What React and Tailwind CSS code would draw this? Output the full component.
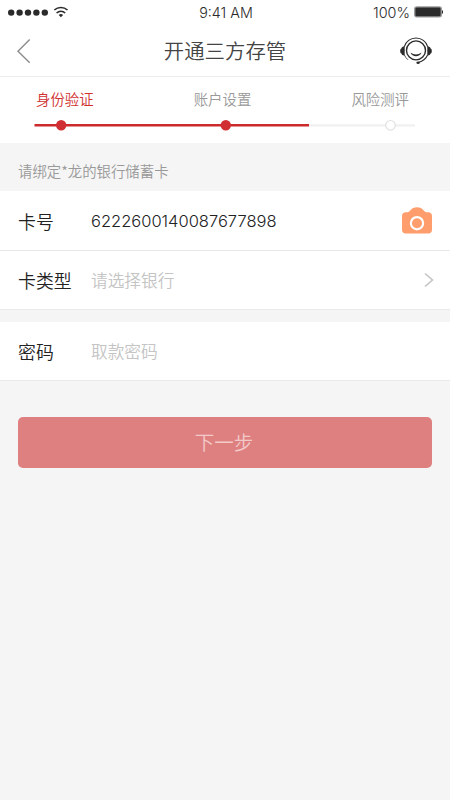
const steps = [
  { label: '身份验证', state: 'current' },
  { label: '账户设置', state: 'reached' },
  { label: '风险测评', state: 'pending' },
]

function StatusBar() {
  return (
    <div className="grid h-[25px] grid-cols-3 items-center pl-2 pr-[6px] font-['Inter','Noto_Sans_CJK_SC',sans-serif] text-[#2b2b2b]">
      <div className="flex items-center">
        <svg width="62" height="14" viewBox="0 0 62 14" fill="currentColor">
          <circle cx="3.2" cy="6.6" r="3.2" />
          <circle cx="11.6" cy="6.6" r="3.2" />
          <circle cx="20" cy="6.6" r="3.2" />
          <circle cx="28.4" cy="6.6" r="3.2" />
          <circle cx="36.8" cy="6.6" r="3.2" />
          <g fill="none" stroke="currentColor" strokeWidth="1.6">
            <path d="M46.3 4a9.8 9.8 0 0 1 13.2 0" />
            <path d="M48.6 7a6.2 6.2 0 0 1 8.6 0" />
          </g>
          <path d="M50.7 9a3.2 3.2 0 0 1 4.4 0l-2.2 2.300z" />
        </svg>
      </div>
      <span className="pt-px text-center text-[14.3px] font-[350]">9:41 AM</span>
      <div className="flex items-center justify-end gap-1">
        <span className="pt-px text-[14.4px] font-[350]">100%</span>
        <svg className="mr-px" width="29" height="12" viewBox="0 0 29 12">
          <rect x="0.7" y="0.9" width="26.6" height="10" rx="1.8" fill="#2b2b2b" stroke="#9b9b9b" strokeWidth="1.4" />
          <path d="M28 4v4c1.5-.6 1.5-3.4 0-4z" fill="#2b2b2b" />
        </svg>
      </div>
    </div>
  )
}

function ServiceIcon() {
  return (
    <svg width="32" height="28" viewBox="0 0 32 28" fill="none" stroke="#2b2b2b">
      <path d="M4.2 9.8A12.3 12.3 0 0 1 27.8 9.8M27.6 18c-1.6 3.7-4.8 6.3-9.2 7.500" strokeWidth="1.1" />
      <path d="M4.4 18a12.3 12.3 0 0 0 3.6 4.800" strokeWidth="0.8" />
      <circle cx="16" cy="13.4" r="9.5" strokeWidth="1.4" />
      <path d="M10.5 15.5c3.2 2.500 7.800 2.500 11 0c-1.700 5-9.300 5-11 0z" fill="#2b2b2b" stroke="none" />
      <path d="M4.7 9.600v8.800c-1.700.2-2.900-.4-3.300-1.900C.6 16.300.2 15.400.2 14s.4-2.300 1.200-2.500c.4-1.500 1.600-2.100 3.300-1.900zM27.300 9.600v8.800c1.700.2 2.900-.4 3.300-1.900.8-.2 1.200-1.100 1.200-2.500s-.4-2.300-1.200-2.500c-.4-1.500-1.600-2.100-3.300-1.900z" fill="#2b2b2b" stroke="none" />
      <ellipse cx="18.1" cy="25.8" rx="1.7" ry="1.3" fill="#2b2b2b" stroke="none" />
    </svg>
  )
}

function CameraIcon() {
  return (
    <svg className="mb-1" width="30" height="27" viewBox="0 0 30 27">
      <path d="M4 5.3h1.5C8 5.300 9 .3 15 .3s7 5 9.500 5H26a4 4 0 0 1 4 4v13.200a4 4 0 0 1-4 4H4a4 4 0 0 1-4-4V9.300a4 4 0 0 1 4-4z" fill="#ff9d6c" />
      <circle cx="15" cy="16.2" r="6.1" fill="none" stroke="#fff" strokeWidth="2.2" />
    </svg>
  )
}

function Header() {
  return (
    <header className="border-b border-[#ededed]">
      <StatusBar />
      <div className="flex h-[51px] items-center justify-between pl-[17px] pr-[18px]">
        <svg width="32" height="26" viewBox="0 0 32 26" fill="none" stroke="#8c8c8c" strokeWidth="1.4">
          <path d="M12.7 1.5L1 13.3l11.7 11.5" />
        </svg>
        <h1 className="pl-px text-[20.4px] font-[350] text-[#444]">开通三方存管</h1>
        <ServiceIcon />
      </div>
    </header>
  )
}

function Steps() {
  return (
    <section className="h-[66px] pt-[11px]">
      <div className="flex justify-between pl-9 pr-[41px] text-[14.4px] font-[350] leading-[22px]">
        {steps.map(s => (
          <span key={s.label} className={s.state === 'current' ? 'text-[#d0302f]' : 'text-[#999]'}>
            {s.label}
          </span>
        ))}
      </div>
      <svg className="ml-[34px] mt-[9px]" width="381" height="12" viewBox="0 0 381 12">
        <path d="M274 6.3h107" stroke="#f0f0f0" strokeWidth="2.2" />
        <path d="M0.5 6.3h274.5" stroke="#cc2b2e" strokeWidth="2.4" />
        <circle cx="27.2" cy="6.3" r="5.2" fill="#d03033" />
        <circle cx="191.8" cy="6.3" r="5.2" fill="#d03033" />
        <circle cx="356.5" cy="6.3" r="4.8" fill="#fff" stroke="#e0e0e0" strokeWidth="1.2" />
      </svg>
    </section>
  )
}

function Row({ label, children }) {
  return (
    <div className="flex h-[59px] items-center border-b border-[#e9e9e9] bg-white px-[18px] pt-[3px]">
      <span className="w-[73px] pb-0.5 text-[17.9px] font-[350] text-[#222]">{label}</span>
      {children}
    </div>
  )
}

export default function App() {
  return (
    <div className="h-[800px] w-[450px] overflow-hidden bg-[#f5f5f5] font-['Noto_Sans_CJK_SC',sans-serif]">
      <div className="bg-white">
        <Header />
        <Steps />
      </div>

      <p className="flex h-12 items-center pl-[18px] pt-[7px] text-[14.4px] font-[350] text-[#999]">
        请绑定*龙的银行储蓄卡
      </p>

      <div className="bg-white pt-px">
        <Row label="卡号">
          <span className="flex-1 pb-0.5 font-['Inter',sans-serif] text-[16.5px] font-[350] text-[#222]">6222600140087677898</span>
          <CameraIcon />
        </Row>
        <Row label="卡类型">
          <span className="flex-1 pb-px text-[16.7px] font-[350] text-[#c4c4c4]">请选择银行</span>
          <svg className="-mr-0.5 mb-[3px]" width="10" height="16" viewBox="0 0 10 16" fill="none" stroke="#c4c4c4" strokeWidth="1.6">
            <path d="M1 1.5L8.5 8 1 14.5" />
          </svg>
        </Row>
      </div>

      <div className="mt-3">
        <Row label="密码">
          <span className="pb-px text-[16.7px] font-[350] text-[#c4c4c4]">取款密码</span>
        </Row>
      </div>

      <button className="mx-[18px] mt-[35.5px] h-[51.5px] w-[414px] rounded-[5px] bg-[#de8080] pb-0.5 pr-0.5 text-[19.5px] font-[350] text-[#f3c9c9]">
        下一步
      </button>
    </div>
  )
}
